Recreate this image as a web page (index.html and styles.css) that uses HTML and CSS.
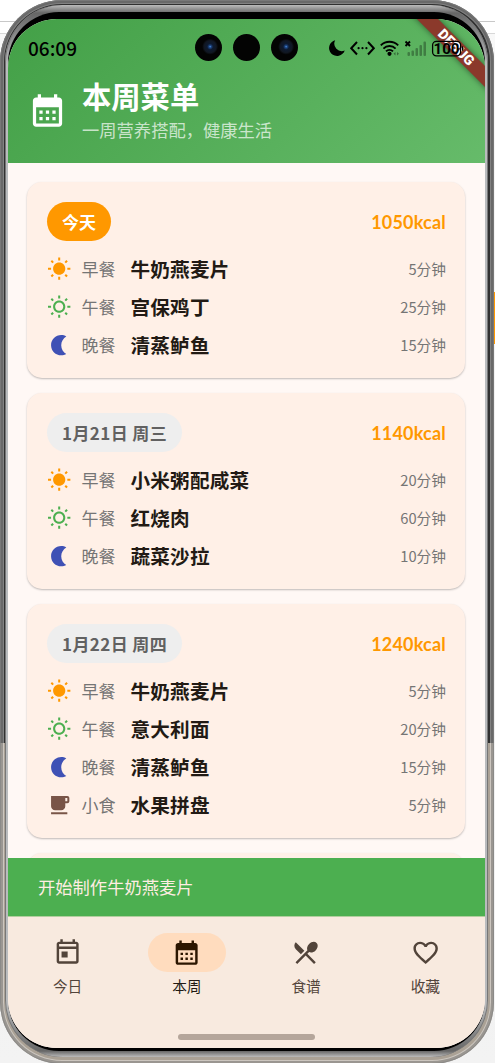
FILE: index.html
```html
<!DOCTYPE html>
<html lang="zh-CN">
<head>
    <meta charset="utf-8">
    <title>本周菜单</title>
    <link rel="stylesheet" href="styles.css">
</head>
<body>
    <svg class="sprite">
        <symbol id="calendar" viewBox="0 0 24 24"><path d="M19 4h-1V2h-2v2H8V2H6v2H5c-1.11 0-1.99.9-1.99 2L3 20c0 1.1.89 2 2 2h14c1.1 0 2-.9 2-2V6c0-1.1-.9-2-2-2zm0 16H5V10h14v10zM9 14H7v-2h2v2zm4 0h-2v-2h2v2zm4 0h-2v-2h2v2zm-8 4H7v-2h2v2zm4 0h-2v-2h2v2zm4 0h-2v-2h2v2z"/></symbol>
        <symbol id="today" viewBox="0 0 24 24"><path d="M19 3h-1V1h-2v2H8V1H6v2H5c-1.11 0-1.99.9-1.99 2L3 19c0 1.1.89 2 2 2h14c1.1 0 2-.9 2-2V5c0-1.1-.9-2-2-2zm0 16H5V9h14v10zm0-12H5V5h14v2zM7 11h5v5H7z"/></symbol>
        <symbol id="sun" viewBox="0 0 24 24"><path d="M6.76 4.84l-1.8-1.79-1.41 1.41 1.79 1.79 1.42-1.41zM4 10.5H1v2h3v-2zm9-9.95h-2V3.5h2V.55zm7.45 3.91l-1.41-1.41-1.79 1.79 1.41 1.41 1.79-1.79zm-3.21 13.7l1.79 1.8 1.41-1.41-1.8-1.79-1.4 1.4zM20 10.5v2h3v-2h-3zm-8-5c-3.31 0-6 2.69-6 6s2.69 6 6 6 6-2.69 6-6-2.69-6-6-6zm-1 16.95h2V19.5h-2v2.95zm-7.45-3.91l1.41 1.41 1.79-1.8-1.41-1.41-1.79 1.8z"/></symbol>
        <symbol id="sun-outline" viewBox="0 0 24 24"><path fill-rule="evenodd" d="M6.76 4.84l-1.8-1.79-1.41 1.41 1.79 1.79 1.42-1.41zM4 10.5H1v2h3v-2zm9-9.95h-2V3.5h2V.55zm7.45 3.91l-1.41-1.41-1.79 1.79 1.41 1.41 1.79-1.79zm-3.21 13.7l1.79 1.8 1.41-1.41-1.8-1.79-1.4 1.4zM20 10.5v2h3v-2h-3zm-8-5c-3.31 0-6 2.69-6 6s2.69 6 6 6 6-2.69 6-6-2.69-6-6-6zm0 10c-2.21 0-4-1.79-4-4s1.79-4 4-4 4 1.79 4 4-1.79 4-4 4zm-1 6.95h2V19.5h-2v2.95zm-7.45-3.91l1.41 1.41 1.79-1.8-1.41-1.41-1.79 1.8z"/></symbol>
        <symbol id="moon" viewBox="0 0 24 24"><path d="M14 2c1.82 0 3.53.5 5 1.35-2.99 1.73-5 4.95-5 8.65s2.01 6.92 5 8.65C17.53 21.5 15.82 22 14 22 8.48 22 4 17.52 4 12S8.48 2 14 2z"/></symbol>
        <symbol id="coffee" viewBox="0 0 24 24"><path d="M20 3H4v10c0 2.21 1.79 4 4 4h6c2.21 0 4-1.79 4-4v-3h2c1.11 0 2-.89 2-2V5c0-1.11-.89-2-2-2zm0 5h-2V5h2v3zM4 19h16v2H4z"/></symbol>
        <symbol id="recipe" viewBox="0 0 24 24"><path d="M8.1 13.34l2.83-2.83L3.91 3.5c-1.56 1.56-1.56 4.09 0 5.66l4.19 4.18zm6.78-1.81c1.53.71 3.68.21 5.27-1.38 1.91-1.91 2.28-4.65.81-6.12-1.46-1.46-4.2-1.1-6.12.81-1.59 1.59-2.09 3.74-1.38 5.27L3.7 19.87l1.41 1.41L12 14.41l6.88 6.88 1.41-1.41L13.41 13l1.47-1.47z"/></symbol>
        <symbol id="heart" viewBox="0 0 24 24"><path d="M16.5 3c-1.74 0-3.41.81-4.5 2.09C10.91 3.81 9.24 3 7.5 3 4.42 3 2 5.42 2 8.5c0 3.78 3.4 6.86 8.55 11.54L12 21.35l1.45-1.32C18.6 15.36 22 12.28 22 8.5 22 5.42 19.58 3 16.5 3zm-4.4 15.55l-.1.1-.1-.1C7.14 14.24 4 11.39 4 8.5 4 6.5 5.5 5 7.5 5c1.54 0 3.04.99 3.57 2.36h1.87C13.46 5.99 14.96 5 16.5 5c2 0 3.5 1.5 3.5 3.5 0 2.89-3.14 5.74-7.9 10.05z"/></symbol>
    </svg>

    <div class="phone">
        <div class="bezel">
            <div class="glass">
                <div class="screen">
                    <header class="header">
                        <div class="debug">DEBUG</div>
                        <div class="status">
                            <div class="clock">06:09</div>
                            <div class="cameras">
                                <span class="camera lens"></span>
                                <span class="camera"></span>
                                <span class="camera lens"></span>
                            </div>
                            <svg class="signals" viewBox="0 0 136 20" width="136" height="20">
                                <path d="M7.2 2.2A8 8 0 1 0 16.7 12.4 7.4 7.4 0 0 1 7.2 2.2z"/>
                                <path d="M29 4l-5.8 6.2L29 16.5M40 4l5.8 6.2L40 16.5" fill="none" stroke="#000" stroke-width="2"/>
                                <circle cx="30.6" cy="10.2" r="1.1"/><circle cx="34.5" cy="10.2" r="1.1"/><circle cx="38.4" cy="10.2" r="1.1"/>
                                <g fill="none" stroke="#000" stroke-width="1.9">
                                    <path d="M52.8 7.3a12.3 12.3 0 0 1 17.4 0"/>
                                    <path d="M55.4 10.6a8.600 8.600 0 0 1 12.2 0"/>
                                    <path d="M58 13.4a5 5 0 0 1 7 0"/>
                                </g>
                                <circle cx="61.5" cy="15.8" r="2.1"/>
                                <path d="M65.5 15.8l2-1.7v3.4zM71 15.8l-2-1.7v3.4z" opacity=".4"/>
                                <path d="M77.500 3.500l4.500 4.500M82 3.500L77.500 8" stroke="#000" stroke-width="1.9"/>
                                <g opacity=".3">
                                    <rect x="79.5" y="14" width="2.5" height="4" rx="1"/>
                                    <rect x="83.5" y="12.5" width="2.5" height="5.5" rx="1"/>
                                    <rect x="87.5" y="10" width="2.5" height="8" rx="1"/>
                                    <rect x="91.5" y="7" width="2.5" height="11" rx="1"/>
                                    <rect x="95.500" y="3.500" width="2.5" height="14.5" rx="1"/>
                                </g>
                                <rect x="104.6" y="3.3" width="28" height="14.5" rx="3.8" fill="none" stroke="#000" stroke-width="1.3"/>
                                <path d="M134 8q1.5 0 1.5 2.5t-1.500 2.500z"/>
                                <text x="118.500" y="15.600" text-anchor="middle" class="battery">100</text>
                            </svg>
                        </div>
                        <div class="heading">
                            <svg class="heading-icon"><use href="#calendar"/></svg>
                            <div>
                                <h1>本周菜单</h1>
                                <p>一周营养搭配，健康生活</p>
                            </div>
                        </div>
                    </header>

                    <main class="list">
                        <section class="card">
                            <div class="card-top">
                                <span class="date active">今天</span>
                                <span class="kcal">1050kcal</span>
                            </div>
                            <div class="meal"><svg class="breakfast"><use href="#sun"/></svg><span class="type">早餐</span><span class="name">牛奶燕麦片</span><span class="time">5分钟</span></div>
                            <div class="meal"><svg class="lunch"><use href="#sun-outline"/></svg><span class="type">午餐</span><span class="name">宫保鸡丁</span><span class="time">25分钟</span></div>
                            <div class="meal"><svg class="dinner"><use href="#moon"/></svg><span class="type">晚餐</span><span class="name">清蒸鲈鱼</span><span class="time">15分钟</span></div>
                        </section>
                        <section class="card">
                            <div class="card-top">
                                <span class="date">1月21日 周三</span>
                                <span class="kcal">1140kcal</span>
                            </div>
                            <div class="meal"><svg class="breakfast"><use href="#sun"/></svg><span class="type">早餐</span><span class="name">小米粥配咸菜</span><span class="time">20分钟</span></div>
                            <div class="meal"><svg class="lunch"><use href="#sun-outline"/></svg><span class="type">午餐</span><span class="name">红烧肉</span><span class="time">60分钟</span></div>
                            <div class="meal"><svg class="dinner"><use href="#moon"/></svg><span class="type">晚餐</span><span class="name">蔬菜沙拉</span><span class="time">10分钟</span></div>
                        </section>
                        <section class="card">
                            <div class="card-top">
                                <span class="date">1月22日 周四</span>
                                <span class="kcal">1240kcal</span>
                            </div>
                            <div class="meal"><svg class="breakfast"><use href="#sun"/></svg><span class="type">早餐</span><span class="name">牛奶燕麦片</span><span class="time">5分钟</span></div>
                            <div class="meal"><svg class="lunch"><use href="#sun-outline"/></svg><span class="type">午餐</span><span class="name">意大利面</span><span class="time">20分钟</span></div>
                            <div class="meal"><svg class="dinner"><use href="#moon"/></svg><span class="type">晚餐</span><span class="name">清蒸鲈鱼</span><span class="time">15分钟</span></div>
                            <div class="meal"><svg class="snack"><use href="#coffee"/></svg><span class="type">小食</span><span class="name">水果拼盘</span><span class="time">5分钟</span></div>
                        </section>
                        <section class="card next"></section>
                    </main>

                    <div class="snackbar">开始制作牛奶燕麦片</div>

                    <footer class="bottom">
                        <nav class="tabs">
                            <a class="tab"><span class="tab-icon"><svg><use href="#today"/></svg></span>今日</a>
                            <a class="tab selected"><span class="tab-icon"><svg><use href="#calendar"/></svg></span>本周</a>
                            <a class="tab"><span class="tab-icon"><svg><use href="#recipe"/></svg></span>食谱</a>
                            <a class="tab"><span class="tab-icon"><svg><use href="#heart"/></svg></span>收藏</a>
                        </nav>
                        <div class="home-bar"></div>
                    </footer>
                </div>
            </div>
        </div>
    </div>
</body>
</html>
```
FILE: styles.css
```css
* {
    box-sizing: border-box;
}
body {
    margin: 0;
    height: 1063px;
    overflow: hidden;
    font-family: "Noto Sans CJK SC", sans-serif;
    background:
        linear-gradient(#ff9800, #ff9800) 100% 292px / 2px 52px no-repeat,
        linear-gradient(#c8c8c8, #c8c8c8) 0 21px / 100% 1px no-repeat,
        linear-gradient(#d8d8d8, #d8d8d8) 0 33px / 100% 1px no-repeat,
        linear-gradient(#fff 33px, #f8f8f8 34px, #f4f4f4 160px, #eee 600px, #f3f3f3);
}
.sprite {
    display: none;
}
svg {
    display: block;
    fill: currentColor;
}

/* phone frame */
.phone {
    width: 494px;
    height: 1064px;
    padding: 5px 6px 7px 5px;
    border-radius: 62px;
    background: linear-gradient(#303030 743px, #aaa195 743px);
    box-shadow: inset 0 0 0 1px rgba(130, 130, 130, .6), inset 0 0 0 3px rgba(60, 60, 60, .35), inset 0 0 0 4px rgba(255, 255, 255, .4);
}
.bezel {
    height: 1052px;
    padding: 7px 3px 6px;
    border-radius: 57px;
    background: linear-gradient(#bbb, #666 8px, #b9bbbd 60px, #b9bbbd 1000px, #666 1046px, #bbb);
    box-shadow: inset 1px 0 #777, inset -1px 0 #777;
}
.glass {
    height: 1039px;
    padding: 7px 0 3px;
    border-radius: 51px;
    background: #000;
}
.screen {
    position: relative;
    display: flex;
    flex-direction: column;
    height: 1029px;
    border-radius: 49px;
    overflow: hidden;
    background: #fff8f5;
}

.header {
    position: relative;
    flex: none;
    height: 144px;
    color: #fff;
    background: linear-gradient(135deg, #43a047, #66bb6a);
}
.status {
    position: relative;
    display: flex;
    align-items: center;
    height: 57px;
    padding-left: 20px;
    color: #000;
}
.clock {
    width: 167px;
    font-size: 19px;
    font-weight: 500;
    line-height: 57px;
}
.cameras {
    display: flex;
    gap: 11px;
}
.camera {
    width: 27px;
    height: 27px;
    border-radius: 50%;
    background: #030303;
}
.lens {
    background: radial-gradient(circle at 56% 47%, #5aa0e8 0, #1f4a8c 1px, #0d1a30 3px, #111722 6px, #030303 8px);
}
.signals {
    width: 136px;
    margin-left: 30px;
}
.battery {
    font: 700 15px Roboto, sans-serif;
}
.debug {
    position: absolute;
    top: 21px;
    right: -31px;
    width: 120px;
    height: 15px;
    transform: rotate(45deg);
    background: #8b392b;
    box-shadow: 0 0 6px rgba(0, 0, 0, .5);
    font: 900 14px/15px Roboto, sans-serif;
    text-align: center;
}
.heading {
    display: flex;
    align-items: center;
    gap: 15px;
    padding: 0 20px;
    height: 68px;
}
.heading-icon {
    width: 39px;
    height: 39px;
}
h1 {
    margin: 0;
    font-size: 29.3px;
    line-height: 38px;
}
p {
    margin: 0;
    font-size: 17.3px;
    line-height: 31px;
    color: rgba(255, 255, 255, .7);
}

.list {
    flex: 1;
    min-height: 0;
    padding: 19px 20px 0 19px;
    overflow: hidden;
}
.card {
    height: 196px;
    margin-bottom: 15px;
    padding: 20px 19px 0 20px;
    border-radius: 15px;
    background: #fff0e7;
    box-shadow: 0 1px 2px rgba(0, 0, 0, .25);
}
.card:nth-child(3) {
    height: 234px;
}
.card-top {
    display: flex;
    align-items: center;
    justify-content: space-between;
    height: 39px;
    margin-bottom: 9px;
}
.date {
    padding: 0 15px;
    border-radius: 20px;
    background: #eee;
    color: #616161;
    font-size: 17px;
    font-weight: 700;
    letter-spacing: .4px;
    line-height: 39px;
}
.date.active {
    background: #ff9800;
    color: #fff;
    letter-spacing: 0;
}
.kcal {
    color: #ff9800;
    font-family: Lato, sans-serif;
    font-size: 18px;
    font-weight: 700;
    letter-spacing: .2px;
}
.meal {
    display: flex;
    align-items: center;
    height: 38px;
}
.meal svg {
    width: 24.4px;
    height: 24.4px;
    margin-right: 10px;
}
.meal span {
    padding-bottom: 2px;
}
.breakfast {
    color: #ff9800;
}
.lunch {
    color: #4caf50;
}
.dinner {
    color: #3f51b5;
}
.snack {
    color: #795548;
}
.type {
    width: 49px;
    color: #757575;
    font-size: 17px;
}
.name {
    flex: 1;
    color: #221a14;
    font-size: 19.6px;
    font-weight: 700;
    letter-spacing: .25px;
}
.time {
    color: #757575;
    font-size: 14.7px;
}

.snackbar {
    flex: none;
    height: 58px;
    padding-left: 30px;
    background: #4caf50;
    color: #ffede2;
    font-size: 17.3px;
    line-height: 57px;
}
.bottom {
    flex: none;
    height: 132px;
    padding-top: 16px;
    border-top: 1px solid #b2cf9e;
    background: #f8eadf;
}
.tabs {
    display: flex;
}
.tab {
    flex: 1;
    display: flex;
    flex-direction: column;
    align-items: center;
    color: #52443a;
    font-size: 14.7px;
    line-height: 27px;
}
.tab-icon {
    display: flex;
    align-items: center;
    justify-content: center;
    width: 78px;
    height: 39px;
    border-radius: 20px;
}
.tab svg {
    width: 29.3px;
    height: 29.3px;
}
.selected {
    color: #221a14;
}
.selected .tab-icon {
    background: #ffdcbe;
    color: #2c1600;
}
.home-bar {
    width: 137px;
    height: 6px;
    margin: 35px auto 0;
    border-radius: 3px;
    background: #b5a69b;
}
```
